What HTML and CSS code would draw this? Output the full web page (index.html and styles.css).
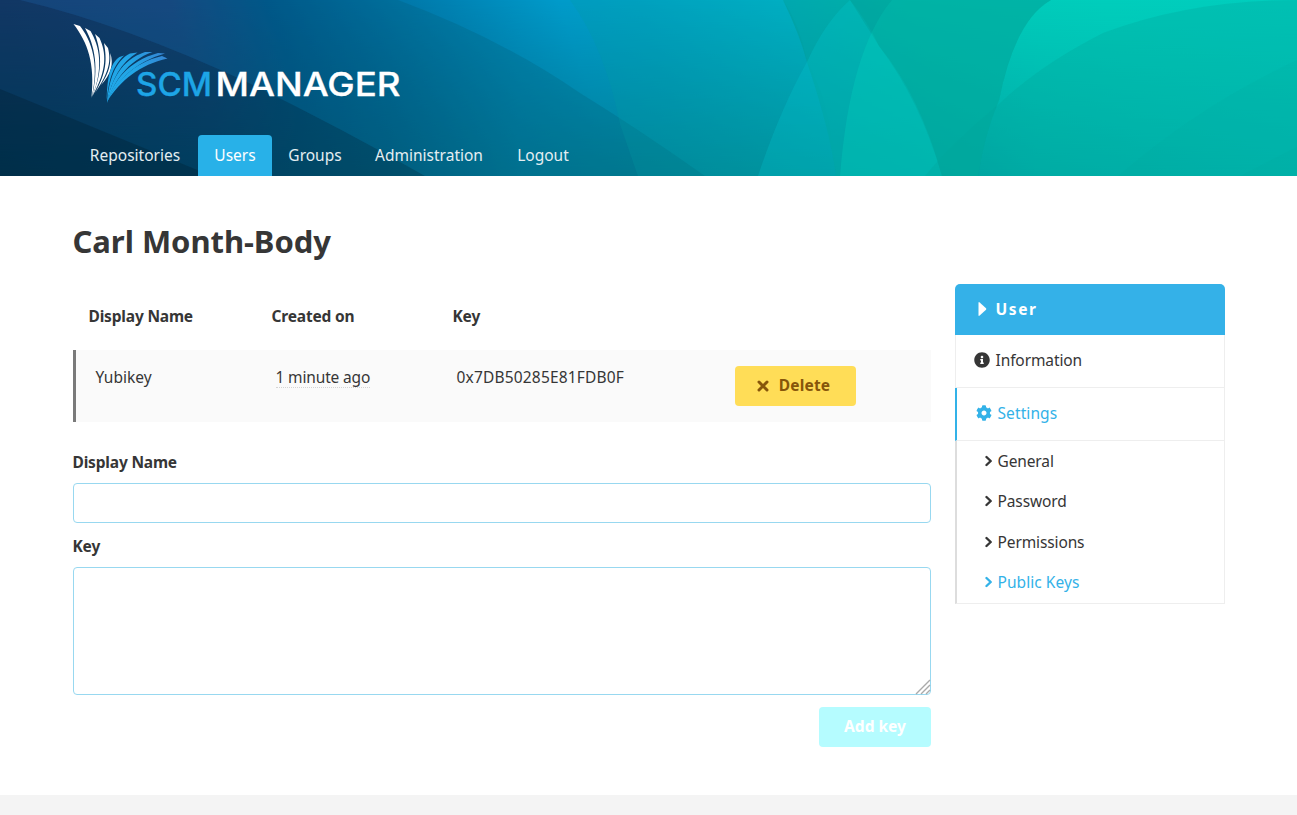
FILE: index.html
```html
<!DOCTYPE html>
<html lang="en">
<head>
<meta charset="utf-8">
<title>SCM-Manager</title>
<link rel="stylesheet" href="styles.css">
</head>
<body>
<header class="hero">
  <svg class="hero-art" viewBox="0 0 1297 176" preserveAspectRatio="none" aria-hidden="true">
    <defs>
      <linearGradient id="top" gradientUnits="userSpaceOnUse" x1="0" y1="0" x2="1297" y2="0" gradientTransform="skewX(20)">
        <stop offset="0" stop-color="#1b3f7c"/><stop offset=".13" stop-color="#1d4686"/>
        <stop offset=".21" stop-color="#005a92"/><stop offset=".31" stop-color="#0078aa"/>
        <stop offset=".43" stop-color="#009bca"/><stop offset=".49" stop-color="#00a2c8"/>
        <stop offset=".6" stop-color="#00b4cc"/><stop offset=".65" stop-color="#00bec2"/>
        <stop offset=".7" stop-color="#00c8ba"/><stop offset=".85" stop-color="#00cebc"/><stop offset="1" stop-color="#00cdbe"/>
      </linearGradient>
      <linearGradient id="bottom">
        <stop offset="0" stop-color="#004068"/><stop offset=".15" stop-color="#004a74"/>
        <stop offset=".3" stop-color="#006084"/><stop offset=".4" stop-color="#007898"/>
        <stop offset=".5" stop-color="#008398"/><stop offset=".62" stop-color="#00939c"/>
        <stop offset=".7" stop-color="#009c9f"/><stop offset=".8" stop-color="#00aea8"/><stop offset="1" stop-color="#00bab2"/>
      </linearGradient>
      <linearGradient id="fade" x2="0" y2="1">
        <stop offset="0" stop-color="#000"/><stop offset="1" stop-color="#fff"/>
      </linearGradient>
      <mask id="down"><rect width="1297" height="176" fill="url(#fade)"/></mask>
    </defs>
    <rect width="1297" height="176" fill="url(#top)"/>
    <rect width="1297" height="176" fill="url(#bottom)" mask="url(#down)"/>
    <path d="M20 0Q125 25 249 83Q345 130 425 176H0V0Z" fill="#002a38" opacity=".34"/>
    <path d="M0 89Q100 130 212 176H0Z" fill="#001828" opacity=".28"/>
    <path d="M398 0Q500 38 580 93Q640 130 705 176H425Q345 130 249 83Q125 25 20 0Z" fill="#00586c" opacity=".22"/>
    <path d="M570 0Q605 48 620 124Q634 165 638 176H836Q830 100 807 62Q800 25 783 0Z" fill="#009ca4" opacity=".25"/>
    <path d="M783 0Q800 35 807 62Q830 130 836 176H978Q984 135 999 100Q1015 20 1051 0Z" fill="#009c94" opacity=".5"/>
    <path d="M850 0Q825 22 807 62Q780 110 758 176H942Q920 95 879 46Z" fill="#00d0dc" opacity=".22"/>
    <path d="M892 0Q850 50 840 176H978Q984 135 999 100Q1015 20 1051 0Z" fill="#00dcc4" opacity=".25"/>
    <path d="M850 0Q868 22 879 46Q920 100 942 176H978Q984 135 999 100Q1015 20 1051 0Z" fill="#009890" opacity=".24"/>
    <path d="M1297 0Q1190 0 1103 33Q1040 65 999 104Q950 145 925 176H1297Z" fill="#00a49c" opacity=".3"/>
    <path d="M1297 60Q1200 105 1118 176H1297Z" fill="#00a49c" opacity=".12"/>
    <path d="M1297 147L1240 176H1297Z" fill="#00a49c" opacity=".12"/>
  </svg>
  <div class="container hero-body">
    <svg class="logo" viewBox="0 0 330 84" role="img" aria-label="SCM-Manager">
      <defs><linearGradient id="wing" gradientUnits="userSpaceOnUse" x1="34" y1="80" x2="94" y2="34"><stop offset="0" stop-color="#20a8e8"/><stop offset=".55" stop-color="#22a5e6"/><stop offset="1" stop-color="#3684d2"/></linearGradient></defs>
      <g fill="#fff">
        <path d="M.500 4L7 6C18 20 27 43 18.500 78C22 43 15 23 .500 4Z"/>
        <path d="M12 8L17.500 11C26.500 26 31 48 19 77C26 48 22 26 12 8Z"/>
        <path d="M22 14L26.500 18C33 32 34.800 49 19.500 76C30.500 49 28 32 22 14Z"/>
        <path d="M31 23L35 28C38 40 37 51 22 73C33.800 52 34 40 31 23Z"/>
        <path d="M37.200 33C41 44 38 54 28 65C36.500 52 38 44 37.200 33Z"/>
      </g>
      <g fill="url(#wing)">
        <path d="M33.800 80C34 59 37 43 46.500 37L51 35.500C41 45 36 57 33.800 80Z"/>
        <path d="M34 83C36 60 42 41 57 33.500L64.500 32.500C48.500 42 38.500 59 34 83Z"/>
        <path d="M34 83C38 61 48 40 72 32L79.500 32C54.500 41 41 61 34 83Z"/>
        <path d="M34.200 82C40 62 55 41 85 33L92 33.600C62.500 42 44.500 60 34.200 82Z"/>
        <path d="M34.500 81C44 61 60 43 89 36L94.500 38.500C67 44.500 47 61 34.500 81Z"/>
      </g>
      <text class="logo-text logo-scm" x="63" y="76" textLength="76" lengthAdjust="spacingAndGlyphs">SCM</text>
      <text class="logo-text" x="142.500" y="76" textLength="185" lengthAdjust="spacingAndGlyphs">MANAGER</text>
    </svg>
    <nav class="tabs">
      <a class="tab tab-repositories">Repositories</a>
      <a class="tab tab-users is-active">Users</a>
      <a class="tab tab-groups">Groups</a>
      <a class="tab tab-admin">Administration</a>
      <a class="tab tab-logout">Logout</a>
    </nav>
  </div>
</header>
<main class="container main">
  <h1 class="title">Carl Month-Body</h1>
  <div class="columns">
    <section class="content">
      <table class="keys">
        <thead><tr><th class="col-name">Display Name</th><th class="col-created">Created on</th><th class="col-key">Key</th><th></th></tr></thead>
        <tbody><tr>
          <td>Yubikey</td>
          <td><time class="date">1 minute ago</time></td>
          <td class="fingerprint">0x7DB50285E81FDB0F</td>
          <td class="actions"><button class="button is-warning"><svg class="icon-x" viewBox="0 0 12 12"><path d="M2 2L10 10M10 2L2 10"/></svg>Delete</button></td>
        </tr></tbody>
      </table>
      <form class="form">
        <label class="label" for="name">Display Name</label>
        <input class="input" id="name">
        <label class="label" for="key">Key</label>
        <div class="area">
          <textarea class="input textarea" id="key"></textarea>
          <svg class="grip" viewBox="0 0 16 16"><path d="M1 15L15 1M6 15L15 6M11 15L15 11"/></svg>
        </div>
        <div class="submit"><button class="button is-primary" type="button" disabled>Add key</button></div>
      </form>
    </section>
    <aside class="menu">
      <div class="menu-label"><svg class="icon-caret" viewBox="0 0 9 16"><path d="M.5 2Q.5.500 1.700 1.500L8 7.200Q8.800 8 8 8.800L1.700 14.500Q.5 15.500.5 14Z"/></svg>User</div>
      <a class="menu-item"><svg class="icon" viewBox="0 0 512 512"><path d="M256 8C119 8 8 119 8 256s111 248 248 248 248-111 248-248S393 8 256 8zm0 110c23.200 0 42 18.800 42 42s-18.800 42-42 42-42-18.800-42-42 18.800-42 42-42zm56 254c0 6.600-5.400 12-12 12h-88c-6.600 0-12-5.400-12-12v-24c0-6.600 5.400-12 12-12h12v-64h-12c-6.600 0-12-5.400-12-12v-24c0-6.600 5.400-12 12-12h64c6.600 0 12 5.400 12 12v100h12c6.600 0 12 5.400 12 12z"/></svg><span>Information</span></a>
      <a class="menu-item is-current"><svg class="icon" viewBox="0 0 512 512"><path d="M487.400 315.700l-42.600-24.600c4.300-23.200 4.300-47 0-70.200l42.600-24.600c4.900-2.800 7.100-8.600 5.500-14-11.100-35.600-30-67.800-54.700-94.600-3.800-4.100-10-5.100-14.800-2.300L380.800 110c-17.900-15.400-38.500-27.300-60.800-35.100V25.800c0-5.600-3.900-10.500-9.400-11.700-36.700-8.200-74.300-7.800-109.200 0-5.500 1.200-9.400 6.100-9.400 11.700V75c-22.200 7.900-42.800 19.800-60.800 35.100L88.700 85.500c-4.900-2.800-11-1.900-14.800 2.300-24.700 26.700-43.600 58.900-54.700 94.600-1.700 5.400.6 11.200 5.500 14L67.300 221c-4.300 23.200-4.300 47 0 70.200l-42.600 24.600c-4.900 2.800-7.100 8.600-5.500 14 11.100 35.600 30 67.800 54.700 94.600 3.800 4.100 10 5.100 14.800 2.300l42.600-24.600c17.900 15.400 38.500 27.300 60.800 35.100v49.200c0 5.600 3.900 10.500 9.400 11.700 36.700 8.200 74.300 7.800 109.200 0 5.500-1.200 9.400-6.100 9.400-11.700v-49.200c22.200-7.900 42.800-19.800 60.800-35.100l42.600 24.600c4.900 2.800 11 1.900 14.800-2.300 24.700-26.700 43.600-58.900 54.700-94.600 1.500-5.500-.7-11.300-5.600-14.100zM256 336c-44.100 0-80-35.900-80-80s35.900-80 80-80 80 35.900 80 80-35.900 80-80 80z"/></svg><span>Settings</span></a>
      <div class="submenu">
        <a class="sub-item"><svg class="icon-chevron" viewBox="0 0 8 12"><path d="M1.500 2L5.700 6L1.500 10"/></svg><span>General</span></a>
        <a class="sub-item"><svg class="icon-chevron" viewBox="0 0 8 12"><path d="M1.500 2L5.700 6L1.500 10"/></svg><span>Password</span></a>
        <a class="sub-item"><svg class="icon-chevron" viewBox="0 0 8 12"><path d="M1.500 2L5.700 6L1.500 10"/></svg><span>Permissions</span></a>
        <a class="sub-item is-selected"><svg class="icon-chevron" viewBox="0 0 8 12"><path d="M1.500 2L5.700 6L1.500 10"/></svg><span>Public Keys</span></a>
      </div>
    </aside>
  </div>
</main>
<footer class="footer"></footer>
</body>
</html>
```
FILE: styles.css
```css
* { box-sizing: border-box; }
body { margin: 0; height: 815px; overflow: hidden; background: #fff; color: #363636; font: 15.500px/24px "Noto Sans", sans-serif; display: flex; flex-direction: column; }
.container { width: 1152px; margin: 0 auto; }

.hero { position: relative; height: 176px; flex: none; }
.hero-art { position: absolute; inset: 0; width: 100%; height: 100%; }
.hero-body { position: relative; height: 176px; padding-top: 20px; display: flex; flex-direction: column; justify-content: space-between; }
.logo { width: 330px; height: 84px; display: block; }
.logo-text { font: 500 32px Inter, sans-serif; fill: #fff; stroke: #fff; stroke-width: 0.300px; }
.logo-scm { fill: #1da5e6; stroke: #1da5e6; }
.tabs { display: flex; height: 41px; }
.tab { display: flex; justify-content: center; color: #e4eef2; line-height: 40px; border-radius: 4px 4px 0 0; }
.tab.is-active { background: #28b1e8; color: #fff; }
.tab-repositories { width: 125px; }
.tab-users { width: 74px; padding-left: 1px; }
.tab-groups { width: 86px; padding-left: 1px; }
.tab-admin { width: 142px; padding-left: 1px; }
.tab-logout { width: 86px; padding-left: 1px; }

.main { flex: none; height: 619px; padding-top: 47px; }
.title { margin: 0 0 25px; font-size: 31px; line-height: 36px; font-weight: 700; letter-spacing: -0.050px; }
.columns { display: grid; grid-template-columns: 858px 270px; gap: 24px; align-items: start; }

.keys { width: 858px; table-layout: fixed; border-collapse: separate; border-spacing: 0; }
.keys th { height: 66px; padding: 0 16px 2px; text-align: left; vertical-align: middle; font-weight: 700; letter-spacing: -0.180px; }
.col-name { width: 183px; }
.col-created { width: 181px; }
.col-key { width: 282px; }
.keys td { height: 72px; padding: 15px 20px; vertical-align: top; background: #fafafa; white-space: nowrap; }
.keys td:first-child { border-left: 3px solid #7a7a7a; }
.keys .fingerprint { letter-spacing: 0.180px; }
.keys .actions { padding: 16px; }
.date { display: inline-block; line-height: 20px; letter-spacing: -0.150px; border-bottom: 1px dotted #d4d4d4; }

.button { height: 40px; border: 0; border-radius: 4px; padding: 0 0 2px; font: 700 15.500px/24px "Noto Sans", sans-serif; }
.is-warning { width: 121px; padding-right: 3px; background: #ffdd57; color: #87560a; display: flex; align-items: center; justify-content: center; gap: 10px; letter-spacing: 0.200px; }
.icon-x { width: 12px; height: 12px; margin-top: 2px; fill: none; stroke: currentColor; stroke-width: 3; stroke-linecap: round; }
.is-primary { width: 112px; padding-left: 1px; background: #b5fcff; color: #fff; }

.form { padding-top: 28px; display: flex; flex-direction: column; }
.label { font-weight: 700; margin-bottom: 9px; letter-spacing: -0.180px; }
.input { display: block; width: 100%; height: 40px; margin: 0 0 11px; border: 1px solid #98d8f0; border-radius: 4px; background: #fff; outline: 0; }
.area { position: relative; margin-bottom: 12px; }
.textarea { height: 128px; margin: 0; resize: none; }
.grip { position: absolute; right: 0; bottom: 0; width: 16px; height: 16px; fill: none; stroke: #aaa; stroke-width: 1.400; }
.submit { display: flex; justify-content: flex-end; }

.menu-label { height: 51px; padding: 0 0 1px 23px; display: flex; align-items: center; gap: 9px; background: #34b1e8; color: #fff; border-radius: 5px 5px 0 0; font-weight: 700; letter-spacing: 1.600px; }
.icon-caret { width: 9px; height: 16px; fill: currentColor; }
.menu-item { height: 53px; padding: 0 0 2px 18px; display: flex; align-items: center; gap: 6px; color: #363636; border: 1px solid #eee; border-top: 0; letter-spacing: -0.100px; }
.menu-item.is-current { border-left: 2px solid #33b2e8; padding-left: 19px; color: #33b2e8; letter-spacing: 0.100px; }
.icon { width: 16px; height: 16px; fill: currentColor; }
.submenu { height: 163px; border: 1px solid #eee; border-top: 0; border-left: 2px solid #ddd; }
.sub-item { height: 40.300px; padding-left: 28px; display: flex; align-items: center; gap: 5px; letter-spacing: -0.120px; }
.icon-chevron { width: 8px; height: 12px; fill: none; stroke: currentColor; stroke-width: 2.400; stroke-linecap: round; stroke-linejoin: round; }
.is-selected { color: #33b2e8; letter-spacing: 0.050px; }

.footer { flex: 1; background: #f4f4f4; }
```
